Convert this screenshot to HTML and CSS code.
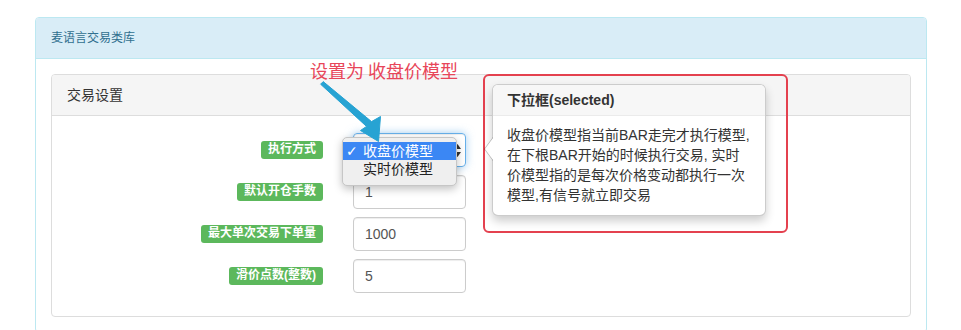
FILE: index.html
```html
<!DOCTYPE html>
<html lang="zh-CN">
<head>
<meta charset="utf-8">
<title>麦语言交易类库</title>
<link rel="stylesheet" href="styles.css">
</head>
<body>
<div class="page">
  <div class="panel panel-info">
    <div class="panel-heading">麦语言交易类库</div>
    <div class="panel-body">
      <div class="panel panel-default">
        <div class="panel-heading panel-heading-lg">交易设置</div>
        <div class="form-body">
          <div class="form-row">
            <div class="lab"><span class="label">执行方式</span></div>
            <div class="control select focus">
              <svg class="updown" width="7" height="13" viewBox="0 0 7 13"><path d="M3.5 0 L7 5 L0 5 Z M3.5 13 L7 8 L0 8 Z" fill="#333"/></svg>
            </div>
          </div>
          <div class="form-row">
            <div class="lab"><span class="label">默认开仓手数</span></div>
            <div class="control">1</div>
          </div>
          <div class="form-row">
            <div class="lab"><span class="label">最大单次交易下单量</span></div>
            <div class="control">1000</div>
          </div>
          <div class="form-row">
            <div class="lab"><span class="label">滑价点数(整数)</span></div>
            <div class="control">5</div>
          </div>
        </div>
      </div>
    </div>
  </div>
</div>

<div class="annot">设置为 收盘价模型</div>

<div class="menu">
  <div class="menu-item active"><span class="check">✓</span>收盘价模型</div>
  <div class="menu-item"><span class="check"></span>实时价模型</div>
</div>

<svg class="arrow" width="961" height="330" viewBox="0 0 961 330">
  <polygon points="323.2,81.6 371.5,121.6 380.5,116.5 378.5,141.5 360.5,130.5 366.5,126.4 320.6,84.2" fill="#27a3d3" stroke="#27a3d3" stroke-width="1" stroke-linejoin="round"/>
</svg>

<div class="redbox"></div>

<div class="popover">
  <div class="popover-title">下拉框(selected)</div>
  <div class="popover-content">收盘价模型指当前BAR走完才执行模型,<br>在下根BAR开始的时候执行交易, 实时<br>价模型指的是每次价格变动都执行一次<br>模型,有信号就立即交易</div>
</div>
</body>
</html>
```

FILE: styles.css
```css
* { box-sizing: border-box; }

html, body {
  margin: 0;
  padding: 0;
  background: #fff;
}

body {
  position: relative;
  width: 961px;
  height: 330px;
  overflow: hidden;
  font-family: "Liberation Sans", "Noto Sans CJK SC", sans-serif;
  color: #333;
}

.page {
  padding: 17px 0 0 35px;
}

.panel {
  border: 1px solid #ddd;
  border-radius: 4px;
  background: #fff;
}

.panel-info {
  width: 892px;
  border-color: #bce8f1;
}

.panel-heading {
  padding: 10px 15px;
  font-size: 12px;
  line-height: 20px;
  border-bottom: 1px solid #ddd;
  border-radius: 3px 3px 0 0;
}

.panel-info > .panel-heading {
  background: #d9edf7;
  color: #31708f;
  border-bottom-color: #bce8f1;
}

.panel-body {
  padding: 15px;
}

.panel-default > .panel-heading {
  background: #f5f5f5;
  color: #333;
}

.panel-heading-lg {
  font-size: 14px;
}

.form-body {
  padding: 17px 15px 15px;
  display: flex;
  flex-direction: column;
  gap: 8px;
}

.form-row {
  display: grid;
  grid-template-columns: 256px 113px;
  column-gap: 30px;
  height: 34px;
}

.form-row:last-child {
  margin-bottom: 8px;
}

.lab {
  display: flex;
  justify-content: flex-end;
  align-items: center;
}

.label {
  display: inline-block;
  background: #5cb85c;
  color: #fff;
  font-weight: bold;
  font-size: 12px;
  line-height: 13px;
  padding: 2px 7px 3px;
  border-radius: 3px;
  white-space: nowrap;
}

.control {
  height: 34px;
  border: 1px solid #ccc;
  border-radius: 4px;
  padding: 6px 11px;
  font-size: 14px;
  line-height: 20px;
  color: #555;
  box-shadow: inset 0 1px 1px rgba(0, 0, 0, .075);
}

.select {
  display: flex;
  justify-content: flex-end;
  align-items: center;
  padding-right: 4px;
}

.focus {
  border-color: #66afe9;
  box-shadow: inset 0 1px 1px rgba(0, 0, 0, .075), 0 0 8px rgba(102, 175, 233, .6);
}

.updown {
  display: block;
}

/* overlays */

.annot {
  position: absolute;
  left: 310px;
  top: 60px;
  font-family: "Noto Sans CJK SC", sans-serif;
  font-size: 18px;
  line-height: 20px;
  color: #e8465a;
  white-space: nowrap;
}

.menu {
  position: absolute;
  left: 342px;
  top: 137px;
  width: 115px;
  height: 49px;
  padding: 4px 0;
  background: #efefef;
  border: 1px solid #c6c6c6;
  border-radius: 5px;
  box-shadow: 0 3px 8px rgba(0, 0, 0, .25);
}

.menu-item {
  display: flex;
  align-items: center;
  height: 18px;
  font-family: "Liberation Sans", "Noto Sans CJK SC", sans-serif;
  font-size: 14px;
  line-height: 16px;
  color: #222;
  white-space: nowrap;
}

.menu-item.active {
  background: #3b87f4;
  color: #fff;
}

.check {
  display: inline-block;
  width: 20px;
  padding-left: 3px;
  font-family: "DejaVu Sans", sans-serif;
  font-size: 14px;
  line-height: 16px;
  font-weight: bold;
}

.arrow {
  position: absolute;
  left: 0;
  top: 0;
  pointer-events: none;
}

.redbox {
  position: absolute;
  left: 483px;
  top: 74px;
  width: 305px;
  height: 159px;
  border: 2.5px solid #e4414f;
  border-radius: 6px;
}

.popover {
  position: absolute;
  left: 492px;
  top: 84px;
  width: 274px;
  background: #fff;
  border: 1px solid rgba(0, 0, 0, .2);
  border-radius: 6px;
  box-shadow: 0 5px 10px rgba(0, 0, 0, .2);
}

.popover::before,
.popover::after {
  content: "";
  position: absolute;
  width: 0;
  height: 0;
  border-style: solid;
  border-color: transparent;
}

.popover::before {
  left: -9px;
  top: 52px;
  border-width: 12px 9px 12px 0;
  border-right-color: rgba(0, 0, 0, .25);
}

.popover::after {
  left: -8px;
  top: 53px;
  border-width: 11px 8px 11px 0;
  border-right-color: #fff;
}

.popover-title {
  padding: 8px 14px;
  font-size: 14px;
  line-height: 14px;
  font-weight: 600;
  background: #f7f7f7;
  border-bottom: 1px solid #ebebeb;
  border-radius: 5px 5px 0 0;
}

.popover-content {
  padding: 9px 14px 10px;
  font-size: 14px;
  line-height: 20px;
  color: #333;
  white-space: nowrap;
}
```
